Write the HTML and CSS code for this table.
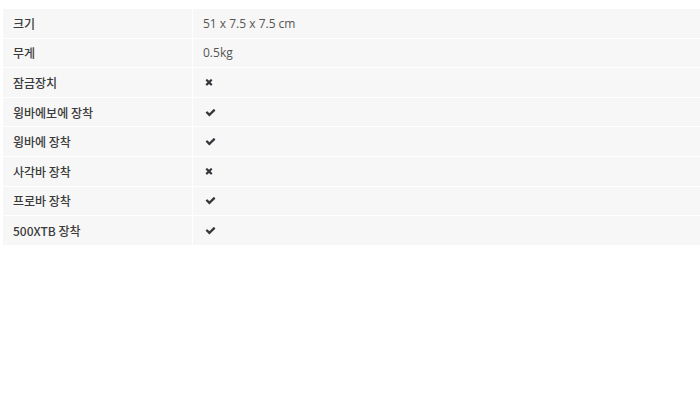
FILE: index.html
```html
<!DOCTYPE html>
<html>
	<head>
		<meta charset="UTF-8">
		<title>제품 사양</title>
		<link rel="stylesheet" href="styles.css">
	</head>
	<body>
		<div class="spec">
			<div class="row"><div class="label">크기</div><div class="value">51 x 7.5 x 7.5 cm</div></div>
			<div class="row"><div class="label">무게</div><div class="value">0.5kg</div></div>
			<div class="row"><div class="label">잠금장치</div><div class="value"><svg class="icon no" viewBox="0 0 1408 1792"><path d="M1298 1322q0 40-28 68l-136 136q-28 28-68 28t-68-28l-294-294-294 294q-28 28-68 28t-68-28l-136-136q-28-28-28-68t28-68l294-294-294-294q-28-28-28-68t28-68l136-136q28-28 68-28t68 28l294 294 294-294q28-28 68-28t68 28l136 136q28 28 28 68t-28 68l-294 294 294 294q28 28 28 68z"/></svg></div></div>
			<div class="row"><div class="label">윙바에보에 장착</div><div class="value"><svg class="icon yes" viewBox="0 0 1792 1792"><path d="M1671 566q0 40-28 68l-724 724-136 136q-28 28-68 28t-68-28l-136-136-362-362q-28-28-28-68t28-68l136-136q28-28 68-28t68 28l294 295 656-657q28-28 68-28t68 28l136 136q28 28 28 68z"/></svg></div></div>
			<div class="row"><div class="label">윙바에 장착</div><div class="value"><svg class="icon yes" viewBox="0 0 1792 1792"><path d="M1671 566q0 40-28 68l-724 724-136 136q-28 28-68 28t-68-28l-136-136-362-362q-28-28-28-68t28-68l136-136q28-28 68-28t68 28l294 295 656-657q28-28 68-28t68 28l136 136q28 28 28 68z"/></svg></div></div>
			<div class="row"><div class="label">사각바 장착</div><div class="value"><svg class="icon no" viewBox="0 0 1408 1792"><path d="M1298 1322q0 40-28 68l-136 136q-28 28-68 28t-68-28l-294-294-294 294q-28 28-68 28t-68-28l-136-136q-28-28-28-68t28-68l294-294-294-294q-28-28-28-68t28-68l136-136q28-28 68-28t68 28l294 294 294-294q28-28 68-28t68 28l136 136q28 28 28 68t-28 68l-294 294 294 294q28 28 28 68z"/></svg></div></div>
			<div class="row"><div class="label">프로바 장착</div><div class="value"><svg class="icon yes" viewBox="0 0 1792 1792"><path d="M1671 566q0 40-28 68l-724 724-136 136q-28 28-68 28t-68-28l-136-136-362-362q-28-28-28-68t28-68l136-136q28-28 68-28t68 28l294 295 656-657q28-28 68-28t68 28l136 136q28 28 28 68z"/></svg></div></div>
			<div class="row"><div class="label">500XTB 장착</div><div class="value"><svg class="icon yes" viewBox="0 0 1792 1792"><path d="M1671 566q0 40-28 68l-724 724-136 136q-28 28-68 28t-68-28l-136-136-362-362q-28-28-28-68t28-68l136-136q28-28 68-28t68 28l294 295 656-657q28-28 68-28t68 28l136 136q28 28 28 68z"/></svg></div></div>
		</div>
	</body>
</html>
```

FILE: styles.css
```css
*{margin: 0;padding: 0;}
body{
	background: #fff;
	font-family: "Noto Sans CJK KR", "Open Sans", sans-serif;
	font-size: 12px;
}
.spec{
	margin: 9px 0 0 3px;
	display: flex;
	flex-direction: column;
	gap: 1px;
}
.row{
	display: flex;
	gap: 1px;
	height: 28.6px;
}
.label, .value{
	background: #f7f7f7;
	display: flex;
	align-items: center;
	padding-left: 10px;
}
.label{
	width: 179px;
	color: #3a3a3a;
	font-weight: 500;
}
.value{
	flex: 1;
	color: #555;
	font-family: "Open Sans", "Noto Sans CJK KR", sans-serif;
}
.icon{
	fill: #34363b;
	margin-left: 2px;
}
.icon.no{
	width: 8px;
	height: 10px;
}
.icon.yes{
	width: 11px;
	height: 11px;
}
```
